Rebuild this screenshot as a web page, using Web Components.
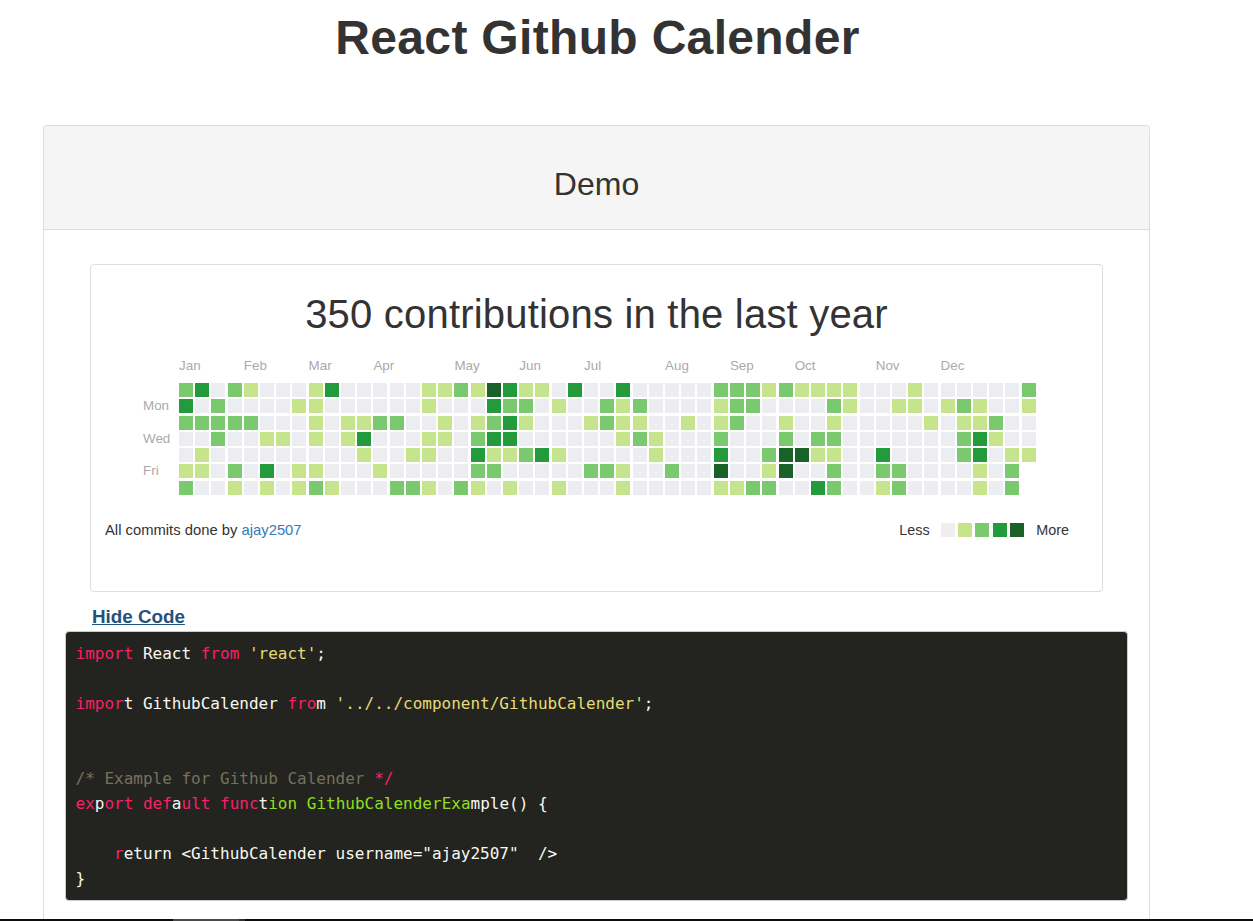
<!DOCTYPE html>
<html>
<head>
<meta charset="utf-8">
<title>React Github Calender</title>
<style>
  html, body { margin: 0; height: 100%; overflow: hidden; background: #fff; }
  body { font-family: "Liberation Sans", Arial, sans-serif; color: #333; }
</style>
</head>
<body>
<demo-page heading="React Github Calender">
  <demo-panel heading="Demo">
    <github-calendar username="ajay2507"></github-calendar>
    <code-toggle>Hide Code</code-toggle>
    <code-block></code-block>
  </demo-panel>
</demo-page>

<script>
const pageTemplate = document.createElement("template");
pageTemplate.innerHTML = `
  <style>
    :host{
      display: flex;
      flex-direction: column;
      height: 921px;
      overflow: hidden;
    }
    .main{
      flex: 1;
      min-height: 0;
      width: 1107px;
      margin-left: 43px;
      display: flex;
      flex-direction: column;
    }
    h1{
      margin: 0;
      padding: 10px 0 60px 2px;
      font-size: 48px;
      line-height: 55px;
      font-weight: bold;
      letter-spacing: 0.33px;
      text-align: center;
      color: #333;
    }
    .bar{
      flex: none;
      height: 2px;
      background: #0d0d0d;
      display: flex;
    }
    .bar i{ width: 66px; margin-left: 173px; background: #4a4a4a; }
    .bar b{ width: 6px; background: #333; }
  </style>
  <div class="main">
    <h1></h1>
    <slot></slot>
  </div>
  <div class="bar"><i></i><b></b></div>
`;

window.customElements.define(
  "demo-page",
  class extends HTMLElement {
    constructor() {
      super()
        .attachShadow({ mode: "open" })
        .appendChild(pageTemplate.content.cloneNode(true));
      this.shadowRoot.querySelector("h1").textContent = this.getAttribute("heading");
    }
  }
);

const panelTemplate = document.createElement("template");
panelTemplate.innerHTML = `
  <style>
    :host{
      display: flex;
      flex-direction: column;
      flex: 1;
      min-height: 0;
      box-sizing: border-box;
      border: 1px solid #ddd;
      border-bottom: 0;
      border-radius: 4px 4px 0 0;
    }
    .heading{
      height: 89px;
      padding-top: 14px;
      display: flex;
      align-items: center;
      justify-content: center;
      background: #f5f5f5;
      border-bottom: 1px solid #ddd;
      border-radius: 3px 3px 0 0;
      font-size: 32px;
      line-height: 35px;
      color: #333;
    }
    .body{
      padding: 34px 46px 0 46px;
    }
  </style>
  <div class="heading"></div>
  <div class="body"><slot></slot></div>
`;

window.customElements.define(
  "demo-panel",
  class extends HTMLElement {
    constructor() {
      super()
        .attachShadow({ mode: "open" })
        .appendChild(panelTemplate.content.cloneNode(true));
      this.shadowRoot.querySelector(".heading").textContent = this.getAttribute("heading");
    }
  }
);

// per weekday row: week index -> level, weeks left out are level 0
const cellLevels = [
  { 0:2,1:3,3:2,4:1,8:1,9:3,15:1,16:1,17:2,18:1,19:4,20:3,21:1,22:1,24:3,27:3,33:2,34:2,35:2,36:1,37:2,38:1,39:1,40:1,41:1,45:1,52:2 },
  { 0:3,2:2,7:1,8:1,15:1,19:3,20:2,21:2,23:1,26:2,27:1,28:2,33:1,34:2,35:2,40:2,41:1,44:1,45:1,47:1,48:2,49:1,52:1 },
  { 0:2,1:2,2:2,3:2,4:2,8:1,10:1,11:1,12:2,13:2,16:1,18:1,19:2,20:3,21:1,25:1,26:2,27:1,28:1,31:1,33:1,34:2,37:1,40:1,46:1,48:1,49:1,50:2 },
  { 2:2,5:1,6:1,8:1,10:1,11:3,15:1,16:1,18:2,19:3,20:3,27:1,28:2,29:1,33:2,37:2,39:2,40:2,48:2,49:3,50:1 },
  { 1:1,11:1,14:1,15:1,18:3,19:1,20:1,21:2,22:3,23:1,29:1,33:3,36:2,37:4,38:4,39:1,40:1,43:3,48:2,49:3,51:1,52:1 },
  { 0:1,1:1,3:2,5:3,7:1,8:1,12:1,18:2,19:2,25:2,26:2,27:1,30:2,33:4,36:1,37:4,40:2,43:2,44:2,49:1,51:2 },
  { 0:2,3:1,5:1,7:1,8:2,9:1,13:2,14:2,15:1,17:2,18:1,20:1,23:1,27:1,33:1,34:1,35:2,36:2,39:3,40:2,43:1,44:2,49:1,51:2 }
];

const MONTHS = [
  ["Jan", 0], ["Feb", 4], ["Mar", 8], ["Apr", 12], ["May", 17], ["Jun", 21],
  ["Jul", 25], ["Aug", 30], ["Sep", 34], ["Oct", 38], ["Nov", 43], ["Dec", 47]
];

const calendarTemplate = document.createElement("template");
calendarTemplate.innerHTML = `
  <style>
    :host{
      display: block;
      box-sizing: border-box;
      height: 328px;
      border: 1px solid #ddd;
      border-radius: 4px;
      padding-top: 27px;
    }
    h2{
      margin: 0 0 22px 0;
      font-size: 40px;
      line-height: 44px;
      font-weight: normal;
      letter-spacing: 0.2px;
      text-align: center;
      color: #333;
    }
    .grid{
      display: grid;
      margin-left: 52px;
      grid-template-columns: 33.79px repeat(53, 14px);
      grid-template-rows: 22.7px repeat(7, 14px);
      column-gap: 2.21px;
      row-gap: 2.3px;
      font-size: 13.4px;
      line-height: 14px;
      color: #aaa;
    }
    .month{ grid-row: 1; white-space: nowrap; padding-top: 1px; }
    .day{ grid-column: 1; align-self: center; }
    .cell{ background: #ebedf0; }
    .l1{ background: #c6e48b; }
    .l2{ background: #7bc96f; }
    .l3{ background: #239a3b; }
    .l4{ background: #196127; }
    .footer{
      display: flex;
      justify-content: space-between;
      align-items: center;
      margin-top: 25px;
      padding: 0 33px 0 14px;
      font-size: 14.8px;
      line-height: 20px;
      color: #333;
    }
    a{ color: #337ab7; text-decoration: none; }
    .legend{ display: flex; align-items: center; font-size: 14.4px; }
    .legend span{ margin-right: 11px; }
    .legend span:last-child{ margin: 0 0 0 12px; }
    .legend i{ width: 14px; height: 14px; margin-right: 3.4px; background: #eee; }
    .legend i:nth-of-type(5){ margin-right: 0; }
    .legend i.l1{ background: #c6e48b; }
    .legend i.l2{ background: #7bc96f; }
    .legend i.l3{ background: #239a3b; }
    .legend i.l4{ background: #196127; }
  </style>
  <h2>350 contributions in the last year</h2>
  <div class="grid"></div>
  <div class="footer">
    <div>All commits done by <a href="#"></a></div>
    <div class="legend">
      <span>Less</span><i></i><i class="l1"></i><i class="l2"></i><i class="l3"></i><i class="l4"></i><span>More</span>
    </div>
  </div>
`;

window.customElements.define(
  "github-calendar",
  class extends HTMLElement {
    constructor() {
      super()
        .attachShadow({ mode: "open" })
        .appendChild(calendarTemplate.content.cloneNode(true));
      this.shadowRoot.querySelector("a").textContent = this.getAttribute("username");
      const grid = this.shadowRoot.querySelector(".grid");
      MONTHS.forEach(([name, week]) => {
        const el = document.createElement("div");
        el.className = "month";
        el.style.gridColumn = week + 2 + " / span 3";
        el.textContent = name;
        grid.appendChild(el);
      });
      [["Mon", 1], ["Wed", 3], ["Fri", 5]].forEach(([name, row]) => {
        const el = document.createElement("div");
        el.className = "day";
        el.style.gridRow = row + 2;
        el.textContent = name;
        grid.appendChild(el);
      });
      cellLevels.forEach((levels, row) => {
        // the last week stops on Thursday
        const weeks = row > 4 ? 52 : 53;
        for (let week = 0; week < weeks; week++) {
          const el = document.createElement("div");
          el.className = "cell" + (levels[week] ? " l" + levels[week] : "");
          el.style.gridRow = row + 2;
          el.style.gridColumn = week + 2;
          grid.appendChild(el);
        }
      });
    }
  }
);

const toggleTemplate = document.createElement("template");
toggleTemplate.innerHTML = `
  <style>
    :host{
      display: block;
      margin: 15px 0 4px 2px;
      font-size: 18.8px;
      line-height: 20px;
      font-weight: bold;
    }
    a{ color: #23527c; text-decoration: underline; }
  </style>
  <a href="#"><slot></slot></a>
`;

window.customElements.define(
  "code-toggle",
  class extends HTMLElement {
    constructor() {
      super()
        .attachShadow({ mode: "open" })
        .appendChild(toggleTemplate.content.cloneNode(true));
    }
  }
);

const codeTemplate = document.createElement("template");
codeTemplate.innerHTML = `
  <style>
    :host{
      display: block;
      margin: 0 -25px;
    }
    pre{
      margin: 0;
      padding: 8.5px 9.5px;
      height: 270px;
      box-sizing: border-box;
      border: 1px solid #ccc;
      border-radius: 4px;
      background: #23241f;
      color: #f8f8f2;
      font-family: "DejaVu Sans Mono", "Liberation Mono", monospace;
      font-size: 16px;
      line-height: 25px;
      overflow: hidden;
    }
    .k{ color: #f92067; }
    .s{ color: #e6db74; }
    .c{ color: #75715e; }
    .f{ color: #8fdf1f; }
  </style>
<pre><span class="k">import</span> React <span class="k">from</span> <span class="s">'react'</span>;

<span class="k">impor</span>t GithubCalender <span class="k">fro</span>m <span class="s">'../../component/GithubCalender'</span>;


<span class="c">/* Example for Github Calender </span><span class="k">*/</span>
<span class="k">ex</span>p<span class="k">ort</span> <span class="k">def</span>a<span class="k">ult</span> <span class="k">func</span>t<span class="f">ion</span> <span class="f">GithubCalenderExa</span>mple() {

    <span class="k">r</span>eturn &lt;GithubCalender username="ajay2507"  /&gt;
}</pre>
`;

window.customElements.define(
  "code-block",
  class extends HTMLElement {
    constructor() {
      super()
        .attachShadow({ mode: "open" })
        .appendChild(codeTemplate.content.cloneNode(true));
    }
  }
);
</script>
</body>
</html>
